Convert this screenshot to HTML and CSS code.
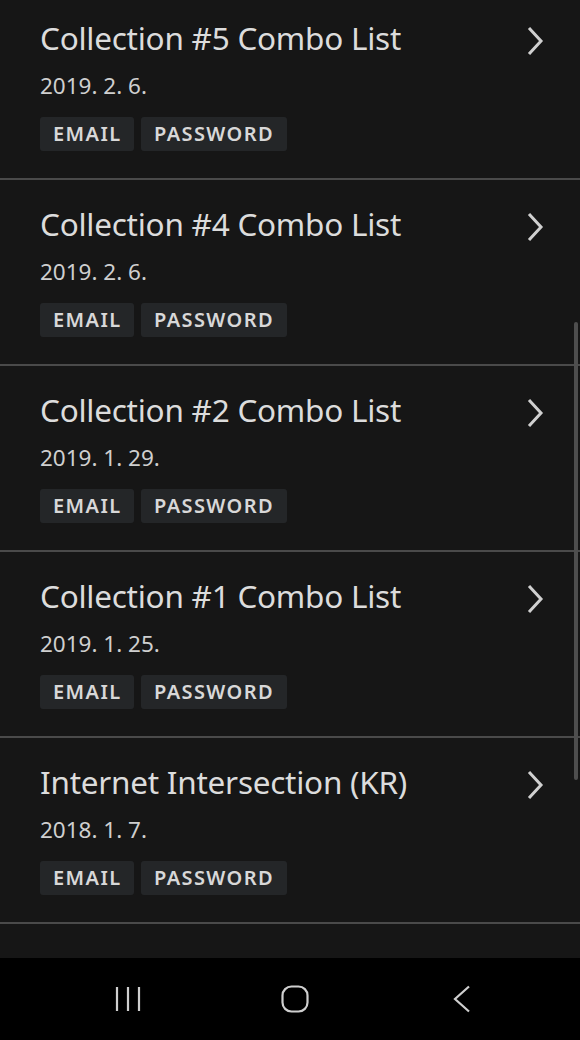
FILE: index.html
```html
<!DOCTYPE html>
<html>
<head>
  <title>Breaches</title>
  <link rel="stylesheet" href="styles.css">
</head>
<body>
  <div class="screen">
    <div class="list">
      <div class="item">
        <div class="item-body">
          <div class="title">Collection #5 Combo List</div>
          <div class="date">2019. 2. 6.</div>
          <div class="tags"><span class="tag">EMAIL</span><span class="tag">PASSWORD</span></div>
        </div>
        <svg class="chev" viewBox="0 0 18 30"><path d="M3 2 L15 15 L3 28" /></svg>
      </div>
      <div class="item">
        <div class="item-body">
          <div class="title">Collection #4 Combo List</div>
          <div class="date">2019. 2. 6.</div>
          <div class="tags"><span class="tag">EMAIL</span><span class="tag">PASSWORD</span></div>
        </div>
        <svg class="chev" viewBox="0 0 18 30"><path d="M3 2 L15 15 L3 28" /></svg>
      </div>
      <div class="item">
        <div class="item-body">
          <div class="title">Collection #2 Combo List</div>
          <div class="date">2019. 1. 29.</div>
          <div class="tags"><span class="tag">EMAIL</span><span class="tag">PASSWORD</span></div>
        </div>
        <svg class="chev" viewBox="0 0 18 30"><path d="M3 2 L15 15 L3 28" /></svg>
      </div>
      <div class="item">
        <div class="item-body">
          <div class="title">Collection #1 Combo List</div>
          <div class="date">2019. 1. 25.</div>
          <div class="tags"><span class="tag">EMAIL</span><span class="tag">PASSWORD</span></div>
        </div>
        <svg class="chev" viewBox="0 0 18 30"><path d="M3 2 L15 15 L3 28" /></svg>
      </div>
      <div class="item">
        <div class="item-body">
          <div class="title">Internet Intersection (KR)</div>
          <div class="date">2018. 1. 7.</div>
          <div class="tags"><span class="tag">EMAIL</span><span class="tag">PASSWORD</span></div>
        </div>
        <svg class="chev" viewBox="0 0 18 30"><path d="M3 2 L15 15 L3 28" /></svg>
      </div>
      <div class="item"></div>
    </div>
    <div class="scrollbar"></div>
  </div>

  <div class="navbar">
    <span class="nav-slot"><svg class="nav-icon" viewBox="0 0 26 28"><path d="M2 2 V26 M13 2 V26 M24 2 V26" /></svg></span>
    <span class="nav-slot"><svg class="nav-icon" viewBox="0 0 28 28"><rect x="1.5" y="1.5" width="25" height="25" rx="9" /></svg></span>
    <span class="nav-slot"><svg class="nav-icon" viewBox="0 0 20 28"><path d="M17 1.5 L3 14 L17 26.5" /></svg></span>
  </div>
</body>
</html>
```

FILE: styles.css
```css
html, body { margin: 0; padding: 0; }
body {
  width: 580px;
  height: 1040px;
  background: #161616;
  font-family: "Noto Sans", "Open Sans", sans-serif;
  color: #d6d6d6;
  overflow: hidden;
  display: flex;
  flex-direction: column;
}
.screen { position: relative; height: 958px; overflow: hidden; }
.list { margin-top: -6px; }
.item {
  height: 184px;
  border-bottom: 2px solid #4a4a4a;
  display: flex;
  justify-content: space-between;
}
.item-body { padding: 24px 0 0 40px; }
.title { font-size: 31.5px; line-height: 40px; color: #dcdcdc; letter-spacing: -0.25px; }
.date { font-size: 22.5px; line-height: 28px; margin-top: 14px; color: #cfcfcf; }
.tags { display: flex; gap: 7px; margin-top: 17px; }
.tag {
  background: #242628;
  border-radius: 3px;
  height: 34px;
  line-height: 34px;
  padding: 0 12.5px 0 13px;
  font-size: 20px;
  font-weight: 600;
  letter-spacing: 1.4px;
  color: #d8d8d8;
}
.chev {
  width: 18px;
  height: 30px;
  margin: 32px 36px 0 0;
  fill: none;
  stroke: #d0d0d0;
  stroke-width: 3;
}
.scrollbar {
  position: absolute;
  right: 2px;
  top: 322px;
  width: 4px;
  height: 458px;
  border-radius: 2px;
  background: #4e4e4e;
}
.navbar {
  height: 82px;
  background: #000;
  display: flex;
  align-items: center;
  gap: 127px;
  padding-left: 108px;
}
.nav-slot { width: 40px; display: flex; justify-content: center; }
.nav-icon {
  height: 28px;
  width: 28px;
  fill: none;
  stroke: #cfcfcf;
  stroke-width: 2.2;
}
```
